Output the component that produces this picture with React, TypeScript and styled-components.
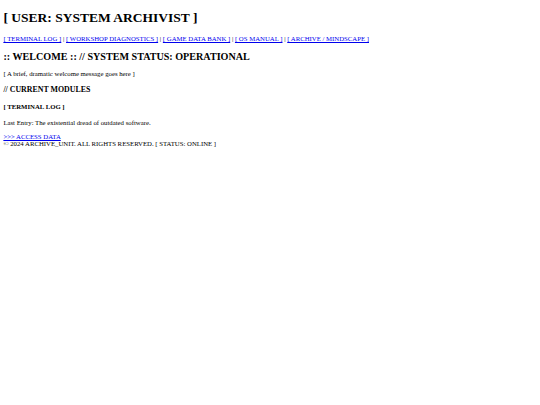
import React from "react";
import styled, { createGlobalStyle } from "styled-components";

// the page is a plain browser-default document shown at 1280px, shrunk to 540px
const S = 540 / 1280;
const px = (v: number) => `${(v * S).toFixed(3)}px`;

const GlobalStyle = createGlobalStyle`
  html, body {
    background: #fff;
  }
  body {
    margin: ${px(8)};
    font-family: "Liberation Serif", "Times New Roman", serif;
    font-size: ${px(16)};
    color: #000;
  }
`;

const Title = styled.h1`
  font-size: ${px(32)};
  font-weight: 700;
  margin: 7px 0 ${px(21.44)};
`;

const Nav = styled.nav`
  font-size: ${px(16)};
`;

const NavLink = styled.a`
  color: #0000ee;
  text-decoration: underline;
`;

const Heading = styled.h2`
  font-size: ${px(24)};
  font-weight: 700;
  margin: ${px(19.92)} 0;
`;

const Text = styled.p`
  font-size: ${px(16)};
  margin: ${px(16)} 0;
`;

const SectionTitle = styled.h3`
  font-size: ${px(18.72)};
  font-weight: 700;
  margin: ${px(18.72)} 0;
`;

const ModuleTitle = styled.h4`
  font-size: ${px(16)};
  font-weight: 700;
  margin: ${px(21.28)} 0;
`;

const ModuleLink = styled.a`
  display: block;
  color: #0000ee;
  text-decoration: underline;
`;

const Footer = styled.footer`
  font-size: ${px(16)};
`;

const links = [
  "[ TERMINAL LOG ]",
  "[ WORKSHOP DIAGNOSTICS ]",
  "[ GAME DATA BANK ]",
  "[ OS MANUAL ]",
  "[ ARCHIVE / MINDSCAPE ]",
];

export default function App() {
  return (
    <>
      <GlobalStyle />
      <header>
        <Title>[ USER: SYSTEM ARCHIVIST ]</Title>
        <Nav>
          {links.map((label, i) => (
            <React.Fragment key={label}>
              {i > 0 && " | "}
              <NavLink href="#">{label}</NavLink>
            </React.Fragment>
          ))}
        </Nav>
      </header>
      <main>
        <section>
          <Heading>:: WELCOME :: // SYSTEM STATUS: OPERATIONAL</Heading>
          <Text>[ A brief, dramatic welcome message goes here ]</Text>
        </section>
        <section>
          <SectionTitle>// CURRENT MODULES</SectionTitle>
          <article>
            <ModuleTitle>[ TERMINAL LOG ]</ModuleTitle>
            <Text>Last Entry: The existential dread of outdated software.</Text>
            <ModuleLink href="#">&gt;&gt;&gt; ACCESS DATA</ModuleLink>
          </article>
        </section>
      </main>
      <Footer>© 2024 ARCHIVE_UNIT. ALL RIGHTS RESERVED. [ STATUS: ONLINE ]</Footer>
    </>
  );
}
